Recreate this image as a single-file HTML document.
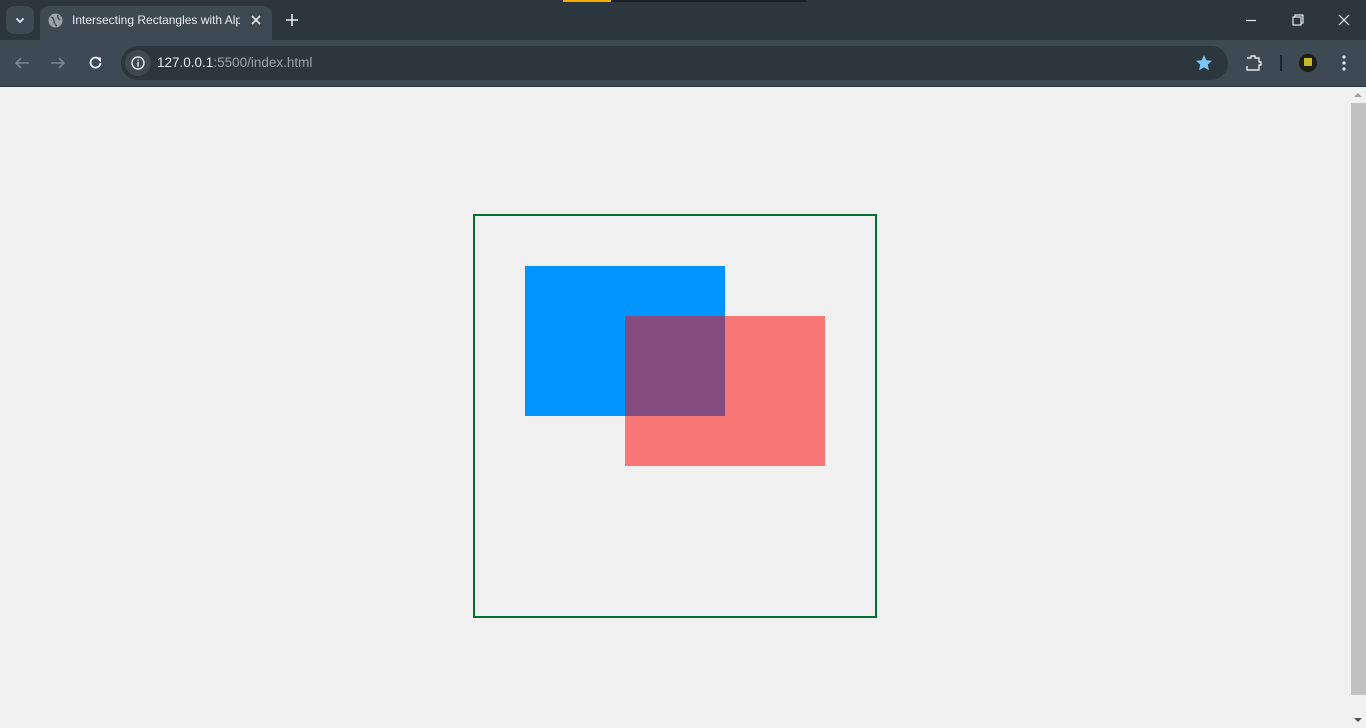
<!DOCTYPE html>
<html><head><meta charset="utf-8"><style>
*{margin:0;padding:0;box-sizing:border-box}
body{width:1366px;height:728px;overflow:hidden;background:#f0f0f0;font-family:"Liberation Sans",sans-serif;position:relative}
.tabbar{position:absolute;left:0;top:0;width:1366px;height:40px;background:#2c363d}
.toolbar{position:absolute;left:0;top:40px;width:1366px;height:47px;background:#3d4a53}
.tab{position:absolute;left:40px;top:6px;width:232px;height:36px;background:#3d4a53;border-radius:9px 9px 0 0}
.tabtitle{position:absolute;left:72px;top:13px;color:#e8eaed;font-size:12px;white-space:nowrap;width:168px;overflow:hidden}
.omni{position:absolute;left:121px;top:46px;width:1107px;height:34px;background:#2c363d;border-radius:17px}
.url{position:absolute;left:157px;top:55px;font-size:13.5px;color:#e8eaed}
.url span{color:#9aa3aa}
.ic{position:absolute}
</style></head><body>
<div class="tabbar"></div>
<div style="position:absolute;left:563px;top:0;width:48px;height:2px;background:#f2a900"></div>
<div style="position:absolute;left:611px;top:0;width:195px;height:2px;background:#1b2125"></div>
<div style="position:absolute;left:6px;top:6px;width:28px;height:28px;background:#3d4a53;border-radius:8px"></div>
<svg class="ic" style="left:13px;top:13px" width="14" height="14"><path d="M3.5 5.5l3.5 3.5 3.5-3.5" stroke="#e8eaed" stroke-width="1.8" fill="none"/></svg>
<div class="tab"></div>
<svg class="ic" style="left:48px;top:13px" width="15" height="15"><circle cx="7.5" cy="7.5" r="7" fill="#9aa3aa"/><path d="M3 4q3 1 3 4t3 5M10 2q-1 3 2 5" stroke="#3d4a53" stroke-width="1.4" fill="none"/></svg>
<div class="tabtitle">Intersecting Rectangles with Alp</div>
<svg class="ic" style="left:250px;top:14px" width="12" height="12"><path d="M2 2l8 8M10 2l-8 8" stroke="#e8eaed" stroke-width="1.6"/></svg>
<svg class="ic" style="left:285px;top:13px" width="14" height="14"><path d="M7 1v12M1 7h12" stroke="#e8eaed" stroke-width="1.6"/></svg>
<svg class="ic" style="left:1240px;top:14px" width="130" height="14"><path d="M6 6.5h10" stroke="#e8eaed" stroke-width="1.2"/><rect x="53" y="3" width="8" height="8" stroke="#e8eaed" fill="none" stroke-width="1.2"/><path d="M55 3v-2h8v8h-2" stroke="#e8eaed" fill="none" stroke-width="1.2"/><path d="M99 1l10 10M109 1l-10 10" stroke="#e8eaed" stroke-width="1.2"/></svg>
<div class="toolbar"></div>
<svg class="ic" style="left:14px;top:55px" width="100" height="16"><path d="M15 8H2M7 3L2 8l5 5" stroke="#7b858c" stroke-width="1.6" fill="none"/><path d="M37 8h13M45 3l5 5-5 5" stroke="#7b858c" stroke-width="1.6" fill="none"/><path d="M85 4a5 5 0 1 0 1.5 4" stroke="#e8eaed" stroke-width="1.8" fill="none"/><path d="M82 2.5h5v5z" fill="#e8eaed"/></svg>
<div class="omni"></div>
<div style="position:absolute;left:125px;top:50px;width:26px;height:26px;border-radius:13px;background:#3d4a53"></div>
<svg class="ic" style="left:131px;top:56px" width="14" height="14"><circle cx="7" cy="7" r="6" stroke="#e8eaed" stroke-width="1.4" fill="none"/><path d="M7 6v4.5M7 3.5v1.2" stroke="#e8eaed" stroke-width="1.5"/></svg>
<div class="url">127.0.0.1<span>:5500/index.html</span></div>
<svg class="ic" style="left:1195px;top:54px" width="18" height="18"><path d="M9 1l2.4 5.2 5.6.6-4.2 3.8 1.2 5.6L9 13.4 4 16.2l1.2-5.6L1 6.8l5.6-.6z" fill="#7cc4f5"/></svg>
<svg class="ic" style="left:1245px;top:54px" width="18" height="18"><path d="M2 4h4v-2h4v2h4v4h2v3h-2v5H2v-4" stroke="#e8eaed" stroke-width="1.4" fill="none" stroke-linejoin="round"/></svg>
<div style="position:absolute;left:1280px;top:55px;width:2px;height:16px;background:#1f262b"></div>
<div style="position:absolute;left:1298px;top:53px;width:20px;height:20px;border-radius:10px;background:#1a1f1a;border:1px solid #444"></div>
<div style="position:absolute;left:1304px;top:58px;width:8px;height:8px;background:#c9b72a"></div>
<svg class="ic" style="left:1338px;top:54px" width="12" height="18"><circle cx="6" cy="3" r="1.6" fill="#e8eaed"/><circle cx="6" cy="9" r="1.6" fill="#e8eaed"/><circle cx="6" cy="15" r="1.6" fill="#e8eaed"/></svg>
<div style="position:absolute;left:0;top:86px;width:1366px;height:1px;background:#2c363d"></div>
<div style="position:absolute;left:1351px;top:87px;width:15px;height:641px;background:#f1f1f1"></div>
<div style="position:absolute;left:1351px;top:103px;width:15px;height:592px;background:#c1c1c1"></div>
<svg class="ic" style="left:1353px;top:91px" width="10" height="8"><path d="M1 6l4-4 4 4z" fill="#a3a3a3"/></svg>
<svg class="ic" style="left:1353px;top:716px" width="10" height="8"><path d="M1 2l4 4 4-4z" fill="#505050"/></svg>
<div style="position:absolute;left:473px;top:214px;width:404px;height:404px;border:2px solid #007030"></div>
<div style="position:absolute;left:525px;top:266px;width:200px;height:150px;background:#0094ff"></div>
<div style="position:absolute;left:625px;top:316px;width:200px;height:150px;background:#f77777"></div>
<div style="position:absolute;left:625px;top:316px;width:100px;height:100px;background:#844c7f"></div>
</body></html>
